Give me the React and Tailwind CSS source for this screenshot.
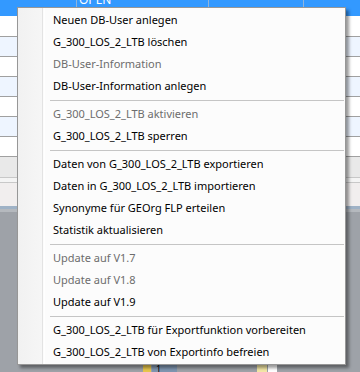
const items = [
  { label: 'Neuen DB-User anlegen' },
  { label: 'G_300_LOS_2_LTB löschen' },
  { label: 'DB-User-Information', disabled: true },
  { label: 'DB-User-Information anlegen' },
  { sep: true },
  { label: 'G_300_LOS_2_LTB aktivieren', disabled: true },
  { label: 'G_300_LOS_2_LTB sperren' },
  { sep: true },
  { label: 'Daten von G_300_LOS_2_LTB exportieren' },
  { label: 'Daten in G_300_LOS_2_LTB importieren' },
  { label: 'Synonyme für GEOrg FLP erteilen' },
  { label: 'Statistik aktualisieren' },
  { sep: true },
  { label: 'Update auf V1.7', disabled: true },
  { label: 'Update auf V1.8', disabled: true },
  { label: 'Update auf V1.9' },
  { sep: true },
  { label: 'G_300_LOS_2_LTB für Exportfunktion vorbereiten' },
  { label: 'G_300_LOS_2_LTB von Exportinfo befreien' },
]

function GridRow({ alt }) {
  return (
    <div
      className={`h-[20px] border-b border-[#a0a0a0] ${alt ? 'bg-[#eef5ff]' : 'bg-white'}`}
    />
  )
}

export default function App() {
  return (
    <div
      className="relative w-[360px] h-[372px] overflow-hidden bg-[#9ea2a8]"
      style={{ fontFamily: '"Noto Sans", "Open Sans", sans-serif' }}
    >
      {/* window behind the menu */}
      <div className="flex flex-col">
        <div className="h-[16px] bg-[#3399ff] flex text-white text-[12px] leading-none">
          <div className="w-[77px] border-r border-[#8fb4dc]" />
          <div className="w-[132px] border-r border-[#8fb4dc] pl-[2px] -mt-[6px]">OPEN</div>
          <div className="w-[95px] border-r border-[#8fb4dc]" />
          <div className="flex-1" />
        </div>
        <div className="h-[21px] bg-white border-b border-[#a0a0a0]" />
        <GridRow alt />
        <GridRow />
        <GridRow alt />
        <GridRow />
        <GridRow alt />
        <GridRow />
        <div className="h-[20px] bg-[#e9e9e9]" />
        <div className="h-[1px] bg-[#c8c8c8]" />
        <div className="h-[4px] bg-[#f4f4f4]" />
        <div className="h-[1px] bg-[#c8c8c8]" />
        <div className="h-[23px] bg-[#f1eeee]" />
        <div className="h-[3px] bg-[#9fb2c6]" />
        <div className="h-[3px] bg-[#b5b9be]" />
        <div
          className="flex-1 h-[156px]"
          style={{
            backgroundImage:
              'repeating-linear-gradient(90deg, #a3a7ad 0px, #bcc0c5 2px, #979ba1 4px, #afb3b8 7px, #c6c9cd 9px, #a0a4aa 11px)',
          }}
        />
      </div>
      <div className="absolute left-[143px] top-[364px] w-[8px] h-[8px] bg-[#e7c64c]" />
      <div className="absolute left-[152px] top-[364px] w-[25px] h-[8px] bg-[#7f95b0] text-[9px] leading-none text-black pl-[4px]">1</div>
      <div className="absolute left-[257px] top-[364px] w-[10px] h-[8px] bg-[#f3e7a6]" />
      <div className="absolute left-[268px] top-[364px] w-[9px] h-[8px] bg-white" />

      {/* context menu */}
      <div className="absolute left-[17px] top-[7px] w-[329px] border border-[#979797] bg-[#fcfcfc] shadow-[3px_3px_3px_rgba(0,0,0,0.4)] py-[1px]">
        <div className="absolute left-0 top-0 bottom-0 w-[25px] bg-gradient-to-r from-[#f1f1f1] to-[#f6f6f6] border-r border-[#e3e3e3]" />
        <div className="absolute left-[26px] top-0 bottom-0 w-[1px] bg-white" />
        <div className="relative flex flex-col">
          {items.map((it, i) =>
            it.sep ? (
              <div key={i} className="h-[6px] flex items-center pl-[32px] pr-[1px]">
                <div className="h-[1px] w-full bg-[#c5c5c5]" />
              </div>
            ) : (
              <div
                key={i}
                className={`h-[22px] flex items-center pl-[35px] text-[11px] whitespace-nowrap ${
                  it.disabled ? 'text-[#6d6d6d]' : 'text-black'
                }`}
              >
                {it.label}
              </div>
            )
          )}
        </div>
      </div>
    </div>
  )
}
